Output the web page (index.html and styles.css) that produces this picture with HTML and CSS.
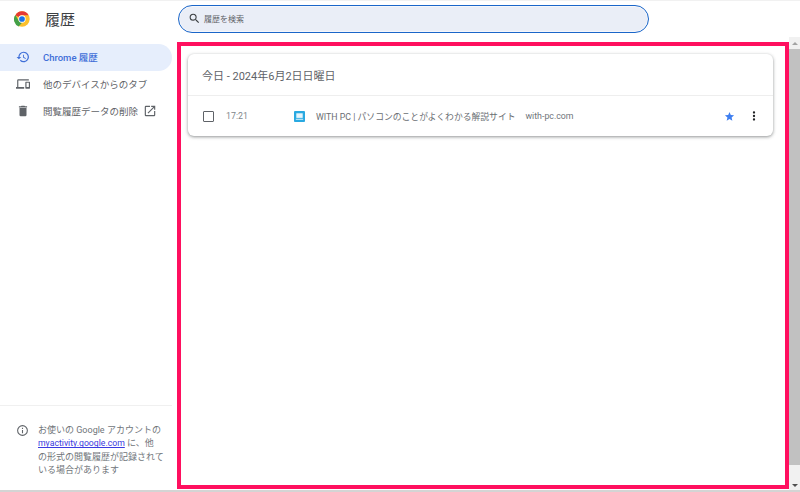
FILE: index.html
```html
<!DOCTYPE html>
<html lang="ja">

<head>
    <meta charset="UTF-8">
    <meta name="viewport" content="width=device-width, initial-scale=1.0">
    <title>履歴</title>
    <link rel="stylesheet" href="styles.css">
</head>

<body>

    <div class="app">
        <!-- Header -->
        <header class="header">
            <div class="brand">
                <svg class="chrome-logo" viewBox="0 0 48 48">
                    <circle cx="24" cy="24" r="23" fill="#fbc02d"/>
                    <path d="M24 1a23 23 0 0 1 19.9 11.5H24a11.5 11.5 0 0 0-10 5.8L4.1 12.5A23 23 0 0 1 24 1z" fill="#e53935"/>
                    <path d="M4.1 12.5 14 29.8a11.5 11.5 0 0 0 10 5.7L14 47A23 23 0 0 1 4.1 12.5z" fill="#43a047" transform="translate(0 -.5)"/>
                    <circle cx="24" cy="24" r="11" fill="#fff"/>
                    <circle cx="24" cy="24" r="8.6" fill="#1a73e8"/>
                </svg>
                <h1 class="title">履歴</h1>
            </div>
            <div class="search">
                <svg class="search-icon" viewBox="0 0 24 24"><path d="M15.5 14h-.79l-.28-.27A6.471 6.471 0 0 0 16 9.5 6.5 6.5 0 1 0 9.5 16c1.61 0 3.09-.59 4.23-1.57l.27.28v.79l5 4.99L20.49 19l-4.99-5zm-6 0C7.01 14 5 11.99 5 9.5S7.01 5 9.5 5 14 7.01 14 9.5 11.99 14 9.5 14z"/></svg>
                <span>履歴を検索</span>
            </div>
        </header>

        <div class="body">
            <!-- Sidebar -->
            <nav class="sidebar">
                <a class="nav-item active">
                    <svg class="nav-icon" viewBox="0 0 24 24"><path d="M13 3a9 9 0 0 0-9 9H1l3.9 3.9.1.1L9 12H6a7 7 0 1 1 2.1 4.9l-1.4 1.4A9 9 0 1 0 13 3zm-1 5v5l4.3 2.5.7-1.2-3.5-2.1V8z"/></svg>
                    <span>Chrome 履歴</span>
                </a>
                <a class="nav-item">
                    <svg class="nav-icon" viewBox="0 0 24 24"><path d="M4 6h18V4H4a2 2 0 0 0-2 2v11H0v3h14v-3H4V6zm19 2h-6a1 1 0 0 0-1 1v10a1 1 0 0 0 1 1h6a1 1 0 0 0 1-1V9a1 1 0 0 0-1-1zm-1 9h-4v-7h4v7z"/></svg>
                    <span>他のデバイスからのタブ</span>
                </a>
                <a class="nav-item">
                    <svg class="nav-icon" viewBox="0 0 24 24"><path d="M6 19a2 2 0 0 0 2 2h8a2 2 0 0 0 2-2V7H6v12zM19 4h-3.5l-1-1h-5l-1 1H5v2h14V4z"/></svg>
                    <span>閲覧履歴データの削除</span>
                    <svg class="open-icon" viewBox="0 0 24 24"><path d="M19 19H5V5h7V3H5a2 2 0 0 0-2 2v14a2 2 0 0 0 2 2h14a2 2 0 0 0 2-2v-7h-2v7zM14 3v2h3.6l-9.8 9.8 1.4 1.4L19 6.4V10h2V3h-7z"/></svg>
                </a>

                <div class="side-note">
                    <svg class="info-icon" viewBox="0 0 24 24"><path d="M11 7h2v2h-2zm0 4h2v6h-2zm1-9a10 10 0 1 0 0 20 10 10 0 0 0 0-20zm0 18a8 8 0 1 1 0-16 8 8 0 0 1 0 16z"/></svg>
                    <p>お使いの Google アカウントの<br><a class="note-link">myactivity.google.com</a> に、他<br>の形式の閲覧履歴が記録されて<br>いる場合があります</p>
                </div>
            </nav>

            <!-- History list -->
            <main class="main">
                <section class="card">
                    <h2 class="card-title">今日 - 2024年6月2日日曜日</h2>
                    <div class="entry">
                        <span class="checkbox"></span>
                        <span class="time">17:21</span>
                        <svg class="favicon" viewBox="0 0 12 12">
                            <rect width="12" height="12" rx="1" fill="#29a9e1"/>
                            <rect x="2.5" y="2.5" width="7" height="5" fill="#e6f5fc"/>
                            <rect x="2" y="8.5" width="8" height="1" fill="#e6f5fc"/>
                        </svg>
                        <span class="entry-title">WITH PC | パソコンのことがよくわかる解説サイト</span>
                        <span class="domain">with-pc.com</span>
                        <svg class="star" viewBox="0 0 24 24"><path d="M12 17.3 18.2 21l-1.6-7L22 9.2l-7.2-.6L12 2 9.2 8.6 2 9.2 7.5 14l-1.7 7z"/></svg>
                        <svg class="more" viewBox="0 0 24 24"><path d="M12 8a2 2 0 1 0 0-4 2 2 0 0 0 0 4zm0 2a2 2 0 1 0 0 4 2 2 0 0 0 0-4zm0 6a2 2 0 1 0 0 4 2 2 0 0 0 0-4z"/></svg>
                    </div>
                </section>
            </main>

            <!-- Scrollbar -->
            <div class="scrollbar">
                <span class="arrow-up"></span>
                <span class="thumb"></span>
                <span class="arrow-down"></span>
            </div>
        </div>

        <!-- Annotation frame drawn over the screenshot -->
        <div class="highlight"></div>
    </div>

</body>

</html>
```

FILE: styles.css
```css
* {
    box-sizing: border-box;
}

html,
body {
    margin: 0;
    height: 100%;
    overflow: hidden;
}

body {
    font-family: Roboto, "Noto Sans CJK JP", sans-serif;
    color: #5f6368;
    background: #fff;
}

.app {
    position: relative;
    display: flex;
    flex-direction: column;
    height: 492px;
    border-top: 1px solid #f1f1f1;
    border-bottom: 2px solid #d4d4d4;
}

.header {
    display: flex;
    align-items: center;
    height: 36px;
    flex-shrink: 0;
}

.brand {
    display: flex;
    align-items: center;
    width: 178px;
    padding-left: 14px;
}

.chrome-logo {
    width: 16px;
    height: 16px;
}

.title {
    margin: 0 0 2px 15px;
    font-size: 15px;
    font-weight: 400;
    color: #3c4043;
}

.search {
    display: flex;
    align-items: center;
    width: 471px;
    height: 28px;
    padding-left: 9px;
    padding-bottom: 1px;
    border: 1px solid #1a66c9;
    border-radius: 14px;
    background: #eaeef7;
    box-shadow: inset 0 0 0 1px #f4f6fb;
    font-size: 8px;
}

.search-icon {
    width: 13px;
    height: 13px;
    margin-right: 3px;
    fill: #3c4043;
}

.body {
    display: flex;
    flex: 1;
    min-height: 0;
}

.sidebar {
    display: flex;
    flex-direction: column;
    width: 172px;
    padding-top: 7px;
    flex-shrink: 0;
}

.nav-item {
    display: flex;
    align-items: center;
    height: 27px;
    padding-left: 16px;
    padding-bottom: 2px;
    border-radius: 0 14px 14px 0;
    font-size: 9.5px;
    color: #5f6368;
}

.nav-item.active {
    background: #e6eefc;
    color: #3f6fd8;
    font-weight: 500;
}

.nav-icon {
    width: 14px;
    height: 14px;
    margin-right: 13px;
    fill: currentColor;
    flex-shrink: 0;
}

.open-icon {
    width: 14px;
    height: 14px;
    margin-left: 5px;
    fill: #5f6368;
}

.side-note {
    display: flex;
    gap: 9px;
    margin-top: auto;
    height: 85px;
    padding: 18px 0 0 16px;
    border-top: 1px solid #f0f0f0;
    font-size: 9px;
    line-height: 13.4px;
    color: #70757a;
}

.side-note p {
    margin: 0;
    white-space: nowrap;
}

.info-icon {
    width: 13px;
    height: 13px;
    fill: #5f6368;
    flex-shrink: 0;
}

.note-link {
    font-size: 8.7px;
    color: #3a3ae0;
    text-decoration: underline;
}

.main {
    flex: 1;
    padding: 17px 16px 0 16px;
}

.card {
    width: 585px;
    border-radius: 6px;
    background: #fff;
    box-shadow: 0 1px 3px rgba(60, 64, 67, 0.45), 0 1px 4px rgba(60, 64, 67, 0.15);
}

.card-title {
    display: flex;
    align-items: center;
    height: 42px;
    margin: 0;
    padding-left: 14px;
    border-bottom: 1px solid #eeeeee;
    font-size: 11px;
    font-weight: 400;
    color: #5f6368;
}

.entry {
    display: flex;
    align-items: center;
    height: 40px;
    padding-left: 15px;
    font-size: 8.8px;
}

.checkbox {
    width: 11px;
    height: 11px;
    border: 1px solid #5f6368;
    border-radius: 1px;
}

.time {
    width: 68px;
    margin-left: 12px;
    color: #80868b;
}

.favicon {
    width: 11px;
    height: 11px;
    margin-right: 11px;
}

.entry-title {
    color: #6a6e73;
}

.domain {
    margin-left: 10px;
    color: #70757a;
}

.star {
    width: 11px;
    height: 11px;
    margin-left: auto;
    fill: #3f7ff0;
}

.more {
    width: 14px;
    height: 14px;
    margin-left: 12px;
    margin-right: 12px;
    fill: #202124;
}

.scrollbar {
    display: flex;
    flex-direction: column;
    align-items: center;
    width: 11px;
    background: #f1f1f1;
    flex-shrink: 0;
}

.arrow-up,
.arrow-down {
    width: 0;
    height: 0;
    border-left: 3px solid transparent;
    border-right: 3px solid transparent;
}

.arrow-up {
    margin: 5px 0 4px;
    border-bottom: 3px solid #a3a3a3;
}

.arrow-down {
    margin: 19px 0 3px;
    border-top: 3px solid #505050;
}

.thumb {
    flex: 1;
    width: 100%;
    background: #c1c1c1;
}

/* red annotation frame */
.highlight {
    position: absolute;
    left: 177px;
    top: 41px;
    width: 612px;
    height: 447px;
    border: 4px solid #ff0f5f;
}
```
